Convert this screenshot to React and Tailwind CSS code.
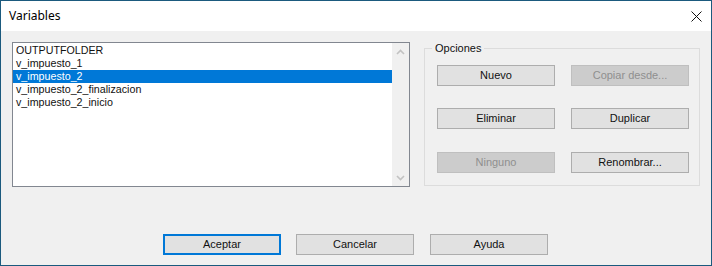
import React from "react";

const font = { fontFamily: '"Liberation Sans", Arial, sans-serif' };

function Btn({ children, disabled, primary, className = "" }) {
  let cls =
    "w-[118px] h-[21px] flex items-center justify-center text-[11px] leading-[13px] ";
  if (disabled) cls += "bg-[#cccccc] border border-[#bfbfbf] text-[#8f8f8f]";
  else if (primary) cls += "bg-[#e1e1e1] border-2 border-[#0078d7] text-[#111]";
  else cls += "bg-[#e1e1e1] border border-[#adadad] text-[#111]";
  return <div className={cls + " " + className}>{children}</div>;
}

function Chevron({ up }) {
  return (
    <svg width="9" height="6" viewBox="0 0 9 6">
      <path
        d={up ? "M1 5 L4.5 1.5 L8 5" : "M1 1 L4.5 4.5 L8 1"}
        fill="none"
        stroke="#c2c2c2"
        strokeWidth="1.6"
      />
    </svg>
  );
}

export default function App() {
  const items = [
    "OUTPUTFOLDER",
    "v_impuesto_1",
    "v_impuesto_2",
    "v_impuesto_2_finalizacion",
    "v_impuesto_2_inicio",
  ];
  return (
    <div
      className="w-[712px] h-[266px] border border-[#1b5a7e] flex flex-col bg-[#f0f0f0] overflow-hidden"
      style={font}
    >
      <div className="h-[30px] bg-white flex items-center justify-between shrink-0">
        <span
          className="pl-[8px] text-[12px] text-black"
          style={{ fontFamily: '"Noto Sans", "Open Sans", sans-serif' }}
        >
          Variables
        </span>
        <div className="pr-[9px] flex items-center">
          <svg width="11" height="11" viewBox="0 0 11 11">
            <path d="M0.5 0.5 L10.5 10.5 M10.5 0.5 L0.5 10.5" stroke="#111" strokeWidth="1" fill="none" />
          </svg>
        </div>
      </div>
      <div className="flex-1 flex flex-col">
        <div className="flex items-start pl-[11px] pt-[11px]">
          <div className="w-[398px] h-[145px] border border-[#828790] bg-white flex">
            <div className="flex-1 pt-[1px]">
              {items.map((it, i) => (
                <div
                  key={it}
                  className={
                    "h-[13px] leading-[13px] text-[10.7px] pl-[3px] " +
                    (i === 2 ? "bg-[#0078d7] text-white" : "text-[#111]")
                  }
                >
                  {it}
                </div>
              ))}
            </div>
            <div className="w-[17px] bg-[#f0f0f0] flex flex-col justify-between">
              <div className="h-[17px] flex items-center justify-center">
                <Chevron up />
              </div>
              <div className="h-[17px] flex items-center justify-center">
                <Chevron />
              </div>
            </div>
          </div>
          <fieldset className="ml-[14px] w-[276px] h-[144px] border border-[#dcdcdc] p-0">
            <legend className="ml-[7px] px-[3px] text-[11px] leading-[13px] text-[#111]">
              Opciones
            </legend>
            <div className="pl-[12px] pt-[10px] flex flex-col">
              <div className="flex gap-[16px]">
                <Btn>Nuevo</Btn>
                <Btn disabled>Copiar desde...</Btn>
              </div>
              <div className="flex gap-[16px] mt-[22px]">
                <Btn>Eliminar</Btn>
                <Btn>Duplicar</Btn>
              </div>
              <div className="flex gap-[16px] mt-[23px]">
                <Btn disabled>Ninguno</Btn>
                <Btn>Renombrar...</Btn>
              </div>
            </div>
          </fieldset>
        </div>
        <div className="flex pl-[162px] mt-[47px]">
          <Btn primary>Aceptar</Btn>
          <Btn className="ml-[15px]">Cancelar</Btn>
          <Btn className="ml-[16px]">Ayuda</Btn>
        </div>
      </div>
    </div>
  );
}
